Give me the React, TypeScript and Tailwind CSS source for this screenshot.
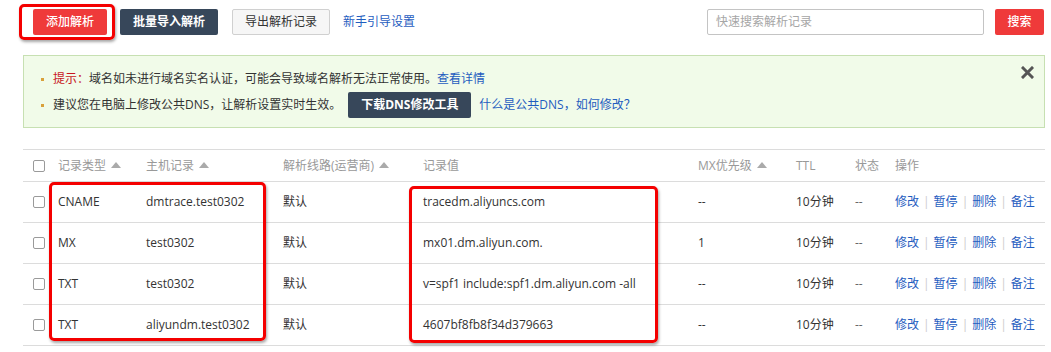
import React from 'react';

const font = { fontFamily: '"Open Sans", "Noto Sans CJK SC", sans-serif' };

interface DnsRecord {
  type: string;
  host: string;
  line: string;
  value: string;
  mx: string;
  ttl: string;
  status: string;
}

const records: DnsRecord[] = [
  { type: 'CNAME', host: 'dmtrace.test0302', line: '默认', value: 'tracedm.aliyuncs.com', mx: '--', ttl: '10分钟', status: '--' },
  { type: 'MX', host: 'test0302', line: '默认', value: 'mx01.dm.aliyun.com.', mx: '1', ttl: '10分钟', status: '--' },
  { type: 'TXT', host: 'test0302', line: '默认', value: 'v=spf1 include:spf1.dm.aliyun.com -all', mx: '--', ttl: '10分钟', status: '--' },
  { type: 'TXT', host: 'aliyundm.test0302', line: '默认', value: '4607bf8fb8f34d379663', mx: '--', ttl: '10分钟', status: '--' },
];

const Checkbox = () => (
  <div className="w-[12px] h-[12px] rounded-[2px] border border-[#9a9a9a] bg-white" />
);

const SortArrow = () => (
  <span className="inline-block ml-[5px] align-middle w-0 h-0 border-l-[5px] border-r-[5px] border-b-[6px] border-l-transparent border-r-transparent border-b-[#aaa] relative -top-[1px]" />
);

const Bullet = () => <span className="w-[3px] h-[3px] bg-[#d9a13a] mr-[9px] shrink-0" />;

const Sep = () => <span className="text-[#ccc] mx-[4px]">|</span>;

export default function App() {
  return (
    <div className="relative w-[1051px] h-[352px] bg-white text-[12px] text-[#333] pt-[9px]" style={font}>
      {/* Toolbar */}
      <div className="flex items-center h-[26px] pl-[33px] pr-[7px]">
        <button className="h-[26px] w-[74px] bg-[#ef3a3a] text-white rounded-[2px] font-medium">添加解析</button>
        <button className="h-[26px] w-[98px] ml-[13px] bg-[#37475a] text-white rounded-[2px] font-bold">批量导入解析</button>
        <button className="h-[26px] w-[98px] ml-[14px] bg-[#f6f6f6] border border-[#d0d0d0] text-[#333] rounded-[2px]">导出解析记录</button>
        <a className="ml-[13px] text-[#1f5dbf]">新手引导设置</a>
        <div className="ml-auto flex items-center">
          <div className="w-[277px] h-[26px] border border-[#c4c4c4] rounded-[2px] px-[8px] flex items-center text-[#a6a6a6]">快速搜索解析记录</div>
          <button className="ml-[11px] h-[26px] w-[49px] bg-[#ef3a3a] text-white rounded-[2px] font-medium">搜索</button>
        </div>
      </div>

      {/* Notice */}
      <div className="relative mt-[20px] ml-[23px] mr-[6px] h-[73px] border border-[#c7e0b2] bg-[#f1fbe9] pt-[13px] pl-[17px]">
        <div className="flex items-center h-[20px]">
          <Bullet />
          <span className="text-[#c8161d]">提示：</span>
          <span>域名如未进行域名实名认证，可能会导致域名解析无法正常使用。</span>
          <a className="text-[#1f5dbf]">查看详情</a>
        </div>
        <div className="flex items-center h-[26px] mt-[3px]">
          <Bullet />
          <span>建议您在电脑上修改公共DNS，让解析设置实时生效。</span>
          <button className="ml-[7px] h-[26px] w-[123px] bg-[#37475a] text-white rounded-[2px] font-bold">下载DNS修改工具</button>
          <a className="ml-[8px] text-[#1f5dbf]">什么是公共DNS，如何修改？</a>
        </div>
        <svg className="absolute right-[10px] top-[10px]" width="13" height="13" viewBox="0 0 13 13">
          <path d="M2 2 L11 11 M11 2 L2 11" stroke="#555" strokeWidth="3" strokeLinecap="square" />
        </svg>
      </div>

      {/* Records table */}
      <table className="mt-[21px] ml-[23px] w-[1022px] table-fixed border-collapse">
        <colgroup>
          <col className="w-[35px]" />
          <col className="w-[88px]" />
          <col className="w-[137px]" />
          <col className="w-[140px]" />
          <col className="w-[275px]" />
          <col className="w-[98px]" />
          <col className="w-[59px]" />
          <col className="w-[40px]" />
          <col className="w-[150px]" />
        </colgroup>
        <thead>
          <tr className="h-[32px] border-t border-b border-[#dcdcdc] text-left text-[#999]">
            <th className="pl-[10px] font-normal"><Checkbox /></th>
            <th className="font-normal">记录类型<SortArrow /></th>
            <th className="font-normal">主机记录<SortArrow /></th>
            <th className="font-normal">解析线路(运营商)<SortArrow /></th>
            <th className="font-normal">记录值</th>
            <th className="font-normal">MX优先级<SortArrow /></th>
            <th className="font-normal">TTL</th>
            <th className="font-normal">状态</th>
            <th className="font-normal">操作</th>
          </tr>
        </thead>
        <tbody>
          {records.map((r, i) => (
            <tr key={i} className="h-[41px] border-b border-[#dcdcdc]">
              <td className="pl-[10px]"><Checkbox /></td>
              <td>{r.type}</td>
              <td>{r.host}</td>
              <td>{r.line}</td>
              <td>{r.value}</td>
              <td>{r.mx}</td>
              <td>{r.ttl}</td>
              <td className="text-[#666]">{r.status}</td>
              <td className="text-[#1f5dbf] whitespace-nowrap">
                修改<Sep />暂停<Sep />删除<Sep />备注
              </td>
            </tr>
          ))}
        </tbody>
      </table>

      {/* Annotation highlights */}
      <div className="absolute left-[19px] top-[4px] w-[96px] h-[36px] border-[3px] border-[#f40000] rounded-[5px] shadow-[1px_2px_3px_rgba(0,0,0,0.35)]" />
      <div className="absolute left-[49px] top-[182px] w-[217px] h-[159px] border-[3px] border-[#f40000] rounded-[5px] shadow-[1px_2px_3px_rgba(0,0,0,0.35)]" />
      <div className="absolute left-[409px] top-[186px] w-[249px] h-[157px] border-[3px] border-[#f40000] rounded-[5px] shadow-[1px_2px_3px_rgba(0,0,0,0.35)]" />
    </div>
  );
}
